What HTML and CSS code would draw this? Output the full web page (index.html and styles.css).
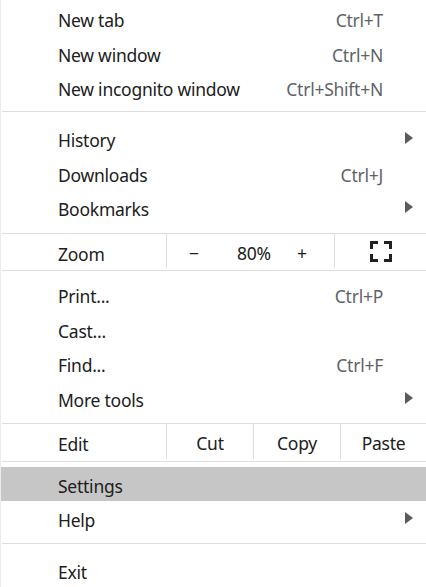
FILE: index.html
```html
<!DOCTYPE html>
<html>
<head>
<meta charset="utf-8">
<link rel="stylesheet" href="styles.css">
</head>
<body>
<div class="menu">
  <div class="group g1">
    <div class="item"><span class="label">New tab</span><span class="accel">Ctrl+T</span></div>
    <div class="item"><span class="label">New window</span><span class="accel">Ctrl+N</span></div>
    <div class="item"><span class="label">New incognito window</span><span class="accel">Ctrl+Shift+N</span></div>
  </div>
  <div class="sep"></div>
  <div class="group g2">
    <div class="item"><span class="label">History</span><span class="arrow"></span></div>
    <div class="item"><span class="label">Downloads</span><span class="accel">Ctrl+J</span></div>
    <div class="item"><span class="label">Bookmarks</span><span class="arrow"></span></div>
  </div>
  <div class="sep"></div>
  <div class="split zoomrow">
    <div class="split-label">Zoom</div>
    <div class="cell zoomctl">
      <span class="zbtn">&minus;</span>
      <span class="zval">80%</span>
      <span class="zbtn">+</span>
    </div>
    <div class="cell fscell">
      <svg class="fs" width="22" height="21" viewBox="0 0 22 21">
        <path d="M1.5 8 V1.5 H8 M14 1.5 H20.5 V8 M20.5 13 V19.5 H14 M8 19.5 H1.5 V13" fill="none" stroke="#202124" stroke-width="3"/>
      </svg>
    </div>
  </div>
  <div class="sep"></div>
  <div class="group g3">
    <div class="item"><span class="label">Print...</span><span class="accel">Ctrl+P</span></div>
    <div class="item"><span class="label">Cast...</span></div>
    <div class="item"><span class="label">Find...</span><span class="accel">Ctrl+F</span></div>
    <div class="item"><span class="label">More tools</span><span class="arrow"></span></div>
  </div>
  <div class="sep"></div>
  <div class="split editrow">
    <div class="split-label">Edit</div>
    <div class="cell ecell">Cut</div>
    <div class="cell ecell">Copy</div>
    <div class="cell ecell last">Paste</div>
  </div>
  <div class="sep"></div>
  <div class="group g4">
    <div class="item selected"><span class="label">Settings</span></div>
    <div class="item"><span class="label">Help</span><span class="arrow"></span></div>
  </div>
  <div class="sep"></div>
  <div class="group g5">
    <div class="item"><span class="label">Exit</span></div>
  </div>
</div>
</body>
</html>
```
FILE: styles.css
```css
* { box-sizing: border-box; }
html, body { margin: 0; padding: 0; background: #ffffff; }
body {
  font-family: "Noto Sans", "Open Sans", sans-serif;
  font-size: 17.5px;
  letter-spacing: -0.25px;
  color: #202020;
}
.menu {
  width: 426px;
  height: 587px;
  overflow: hidden;
  border-left: 1px solid #ececec;
  background: #ffffff;
}
.group { display: flex; flex-direction: column; }
.g1 { padding-top: 1px; padding-bottom: 6.5px; }
.g2 { padding-top: 9px; padding-bottom: 8.5px; }
.g3 { padding-top: 6px; padding-bottom: 8px; }
.g4 { padding-top: 5px; padding-bottom: 7.5px; }
.g5 { padding-top: 8.7px; }
.item {
  display: flex;
  align-items: center;
  height: 34.5px;
  padding-left: 57px;
  padding-top: 4px;
  line-height: 20px;
}
.item.selected { background: #c6c6c6; height: 34px; }
.label { white-space: nowrap; }
.accel {
  margin-left: auto;
  padding-right: 43px;
  color: #5f6368;
  white-space: nowrap;
}
.arrow {
  margin-left: auto;
  margin-right: 13px;
  margin-top: -4px;
  width: 0;
  height: 0;
  border-top: 6px solid transparent;
  border-bottom: 6px solid transparent;
  border-left: 8px solid #5a5a5a;
}
.sep {
  height: 1px;
  margin-left: 1px;
  background: #dedede;
}
.split {
  display: flex;
  height: 36px;
  align-items: stretch;
}
.editrow { height: 37px; }
.split-label {
  width: 165px;
  padding-left: 57px;
  padding-top: 3px;
  display: flex;
  align-items: center;
  line-height: 20px;
}
.cell {
  display: flex;
  align-items: center;
  justify-content: center;
  border-left: 1px solid #dedede;
  margin-bottom: 2px;
  line-height: 20px;
}
.zoomctl { width: 168px; justify-content: flex-start; padding-top: 3px; }
.ecell { padding-top: 3px; }
.zbtn { width: 16px; text-align: center; }
.zoomctl .zbtn:first-child { margin-left: 19px; }
.zval { width: 76px; text-align: center; margin-left: 14px; margin-right: 2px; }
.fscell { flex: 1; }
.fs { display: block; }
.ecell { width: 87px; }
.ecell.last { flex: 1; }
```
